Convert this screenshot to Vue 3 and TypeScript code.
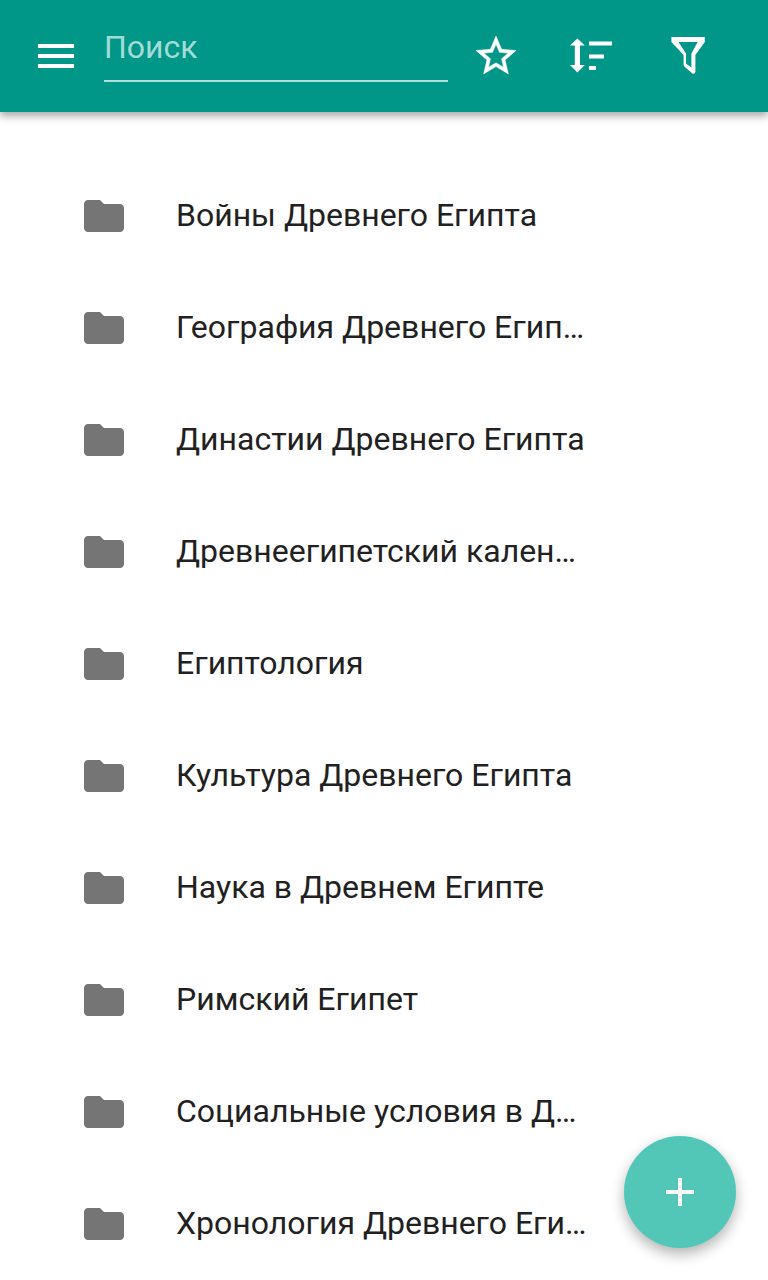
<script setup lang="ts">
const folders: string[] = [
  "Войны Древнего Египта",
  "География Древнего Египта",
  "Династии Древнего Египта",
  "Древнеегипетский календарь",
  "Египтология",
  "Культура Древнего Египта",
  "Наука в Древнем Египте",
  "Римский Египет",
  "Социальные условия в Древнем Египте",
  "Хронология Древнего Египта",
];
</script>

<template>
  <div class="screen">
    <header class="toolbar">
      <button class="icon-btn menu-btn" aria-label="Меню">
        <svg viewBox="0 0 24 24" class="icon"><path d="M3 18h18v-2H3v2zm0-5h18v-2H3v2zm0-7v2h18V6H3z" /></svg>
      </button>
      <div class="search">Поиск</div>
      <button class="icon-btn star-btn" aria-label="Избранное">
        <svg viewBox="0 0 24 24" class="icon">
          <path class="star" d="M22 9.240l-7.190-.62L12 2 9.190 8.630 2 9.240l5.460 4.730L5.820 21 12 17.270 18.180 21l-1.630-7.030L22 9.240zM12 15.400l-3.760 2.270 1-4.280-3.320-2.880 4.380-.38L12 6.100l1.710 4.040 4.380.38-3.320 2.880 1 4.280L12 15.400z" />
        </svg>
      </button>
      <button class="icon-btn" aria-label="Сортировка">
        <svg viewBox="0 0 24 24" class="icon">
          <path d="M4.700 3.300 8.400 6.700H6v9.800h2.400l-3.700 3.800L1 16.500h2.400V6.700H1zM10.500 4.700H22v2H10.500zM10.500 11.300H18v2h-7.500zM10.500 17H14v2h-3.500z" />
        </svg>
      </button>
      <button class="icon-btn" aria-label="Фильтр">
        <svg viewBox="0 0 24 24" class="icon">
          <path
            fill-rule="evenodd"
            d="M3.700 2.500H20.400V5L15.700 11.500V19.800C15.700 20.700 14.900 21.200 14.100 20.600L10.400 17.500C10 17.200 9.800 16.800 9.800 16.400V11.500L3.700 5zM7.300 5H16.800L13.700 10.800V17.800L11 15.700V10.800z"
          />
        </svg>
      </button>
    </header>

    <ul class="list">
      <li v-for="name in folders" :key="name" class="row">
        <svg viewBox="2 4 20 16" class="folder">
          <path d="M10 4H4c-1.100 0-2 .9-2 2v12c0 1.100.9 2 2 2h16c1.100 0 2-.9 2-2V8c0-1.100-.9-2-2-2h-8l-2-2z" />
        </svg>
        <span class="title">{{ name }}</span>
      </li>
    </ul>

    <button class="fab" aria-label="Добавить">
      <svg viewBox="0 0 28 28" class="plus"><path d="M12 0h4v12h12v4H16v12h-4V16H0v-4h12z" /></svg>
    </button>
  </div>
</template>

<style scoped>
.screen {
  position: relative;
  width: 768px;
  height: 1280px;
  overflow: hidden;
  background: #fff;
  font-family: Roboto, "Noto Sans", sans-serif;
}

.toolbar {
  position: relative;
  z-index: 1;
  height: 112px;
  box-sizing: border-box;
  padding: 0 32px;
  display: flex;
  align-items: center;
  background: #009688;
  box-shadow: 0 4px 8px rgba(0, 0, 0, 0.35);
}

.icon-btn {
  width: 48px;
  height: 48px;
  padding: 0;
  margin-left: 48px;
  border: none;
  background: none;
  flex: none;
}

.menu-btn {
  margin-left: 0;
}

.star-btn {
  margin-left: 24px;
}

.icon {
  display: block;
  width: 48px;
  height: 48px;
  fill: #fff;
}

.star {
  stroke: #fff;
  stroke-width: 0.25;
}

.search {
  align-self: flex-start;
  width: 344px;
  height: 82px;
  margin-left: 24px;
  box-sizing: border-box;
  padding-top: 28px;
  border-bottom: 2px solid #b2dfdb;
  color: #a3dcd6;
  font-size: 32px;
  line-height: 38px;
}

.list {
  list-style: none;
  margin: 0;
  padding: 48px 0 0;
}

.row {
  height: 112px;
  display: flex;
  align-items: center;
  padding-left: 84px;
}

.folder {
  width: 40px;
  height: 32px;
  flex: none;
  fill: #757575;
}

.title {
  width: 412px;
  margin-left: 52px;
  padding-bottom: 2px;
  overflow: hidden;
  white-space: nowrap;
  text-overflow: ellipsis;
  color: #212121;
  font-size: 32px;
  line-height: 40px;
}

.fab {
  position: absolute;
  right: 32px;
  bottom: 32px;
  width: 112px;
  height: 112px;
  padding: 0;
  border: none;
  border-radius: 50%;
  display: flex;
  align-items: center;
  justify-content: center;
  background: #53c7b7;
  box-shadow: 0 6px 14px rgba(0, 0, 0, 0.3);
}

.plus {
  width: 28px;
  height: 28px;
  fill: #fff;
}
</style>
